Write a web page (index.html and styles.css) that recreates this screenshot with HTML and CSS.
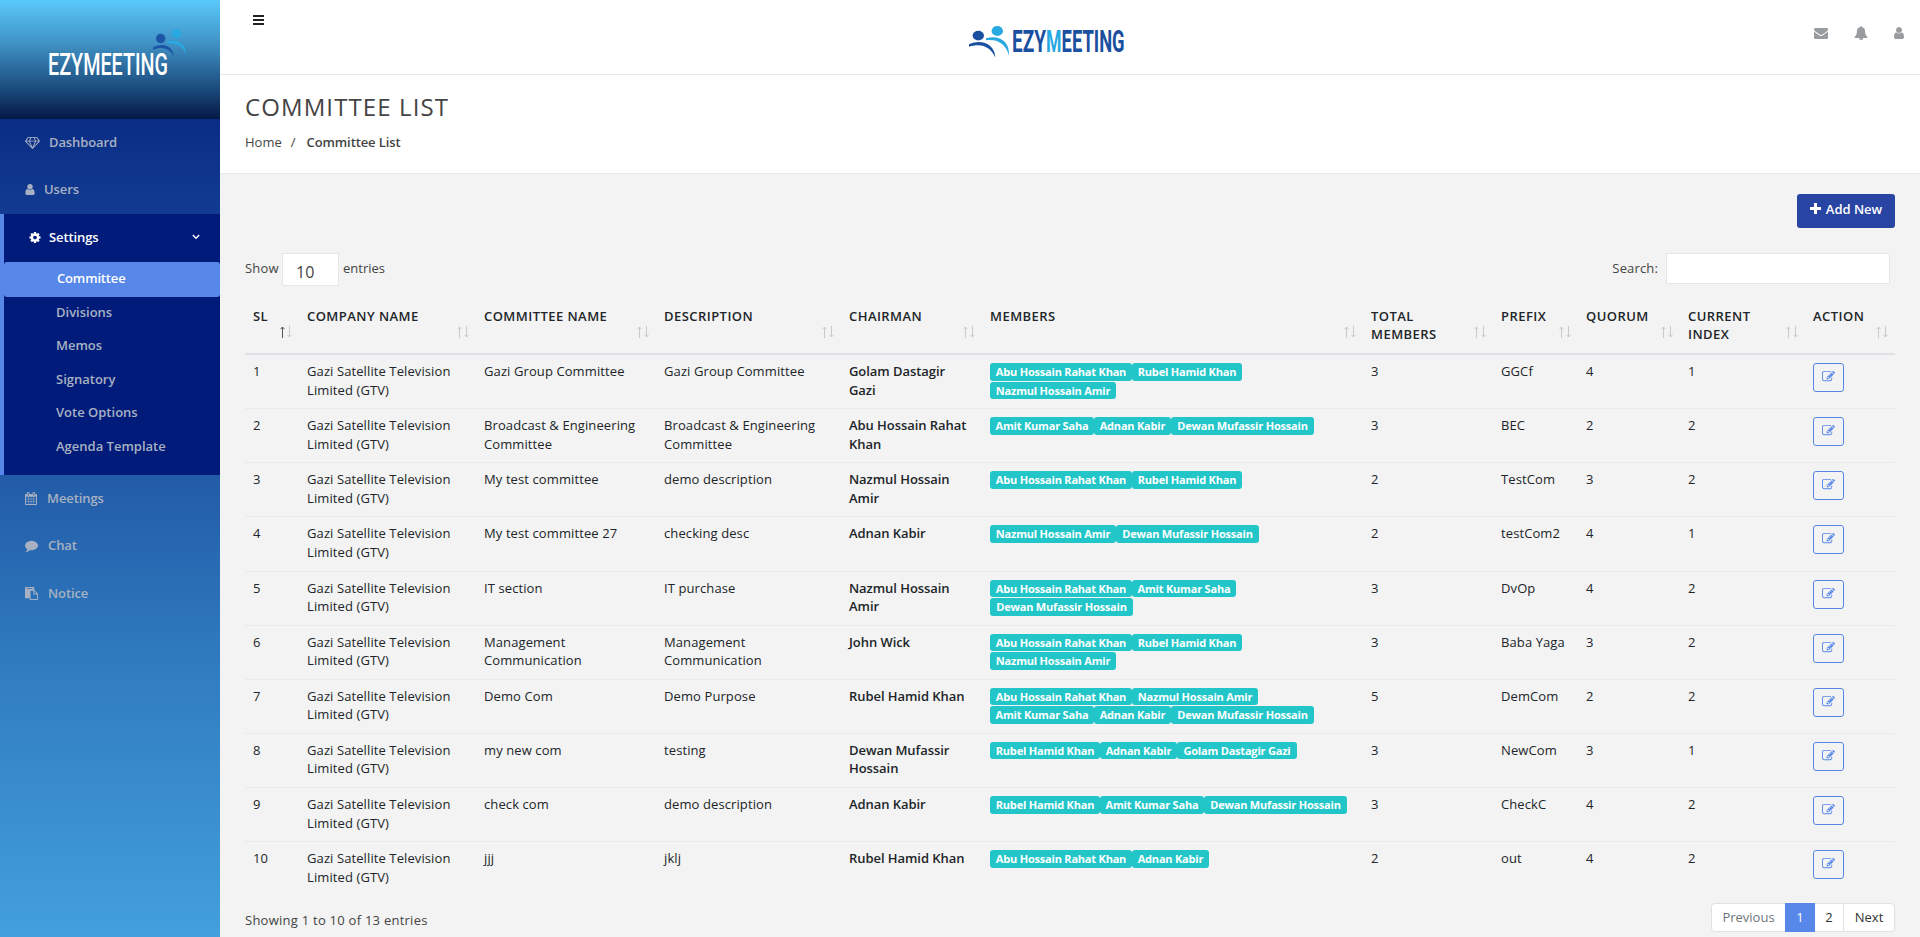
FILE: index.html
```html
<!DOCTYPE html>
<html lang="en">
<head>
<meta charset="utf-8">
<title>Committee List</title>
<link rel="stylesheet" href="styles.css">
</head>
<body>
<svg class="sprite" aria-hidden="true">
  <symbol id="diamond" viewBox="0 0 2048 1792"><path d="M212 768l623 665-300-665h-323zm812 772l349-772h-698l349 772zm-486-900l204-384h-262l-288 384h346zm675 793l623-665h-323l-300 665zm-528-793h678l-204-384h-270l-204 384zm824 0h346l-288-384h-262l204 384zm141-486l384 512q14 18 13 41.500t-17 40.500l-960 1024q-18 20-47 20t-47-20l-960-1024q-16-17-17-40.500t13-41.500l384-512q18-26 51-26h1152q33 0 51 26z"/></symbol>
  <symbol id="user" viewBox="256 0 1280 1792"><path d="M1536 1399q0 109-62.500 187t-150.500 78h-854q-88 0-150.500-78t-62.500-187q0-85 8.500-160.500t31.500-152 58.500-131 94-89 134.500-34.500q131 128 313 128t313-128q76 0 134.500 34.500t94 89 58.500 131 31.500 152 8.500 160.500zm-256-887q0 159-112.500 271.500t-271.500 112.500-271.500-112.500-112.500-271.500 112.500-271.500 271.500-112.500 271.500 112.500 112.500 271.500z"/></symbol>
  <symbol id="cog" viewBox="128 0 1536 1792"><path d="M1152 896q0-106-75-181t-181-75-181 75-75 181 75 181 181 75 181-75 75-181zm512-109v222q0 12-8 23t-20 13l-185 28q-19 54-39 91 35 50 107 138 10 12 10 25t-9 23q-27 37-99 108t-94 71q-12 0-26-9l-138-108q-44 23-91 38-16 136-29 186-7 28-36 28h-222q-14 0-24.500-8.500t-11.500-21.500l-28-184q-49-16-90-37l-141 107q-10 9-25 9-14 0-25-11-126-114-165-168-7-10-7-23 0-12 8-23 15-21 51-66.500t54-70.500q-27-50-41-99l-183-27q-13-2-21-12.500t-8-23.500v-222q0-12 8-23t19-13l186-28q14-46 39-92-40-57-107-138-10-12-10-24 0-10 9-23 26-36 98.500-107.500t94.500-71.500q13 0 26 10l138 107q44-23 91-38 16-136 29-186 7-28 36-28h222q14 0 24.500 8.500t11.500 21.500l28 184q49 16 90 37l142-107q9-9 24-9 13 0 25 10 129 119 165 170 7 8 7 22 0 12-8 23-15 21-51 66.500t-54 70.500q26 50 41 98l183 28q13 2 21 12.500t8 23.500z"/></symbol>
  <symbol id="calendar" viewBox="64 0 1664 1792"><path d="M192 1664h288v-288h-288v288zm352 0h320v-288h-320v288zm-352-352h288v-320h-288v320zm352 0h320v-320h-320v320zm-352-384h288v-288h-288v288zm736 736h320v-288h-320v288zm-384-736h320v-288h-320v288zm768 736h288v-288h-288v288zm-384-352h320v-320h-320v320zm-352-864v-288q0-13-9.500-22.500t-22.500-9.500h-64q-13 0-22.500 9.500t-9.500 22.500v288q0 13 9.500 22.500t22.500 9.500h64q13 0 22.500-9.500t9.500-22.500zm736 864h288v-320h-288v320zm-384-384h320v-288h-320v288zm384 0h288v-288h-288v288zm32-480v-288q0-13-9.500-22.500t-22.500-9.500h-64q-13 0-22.500 9.500t-9.500 22.500v288q0 13 9.500 22.500t22.500 9.500h64q13 0 22.500-9.500t9.500-22.500zm384-64v1280q0 52-38 90t-90 38h-1408q-52 0-90-38t-38-90v-1280q0-52 38-90t90-38h128v-96q0-66 47-113t113-47h64q66 0 113 47t47 113v96h384v-96q0-66 47-113t113-47h64q66 0 113 47t47 113v96h128q52 0 90 38t38 90z"/></symbol>
  <symbol id="comment" viewBox="0 0 1792 1792"><path d="M1792 896q0 174-120 321.500t-326 233-450 85.500q-70 0-145-8-198 175-460 242-49 14-114 22-17 2-30.500-9t-17.500-29v-1q-3-4-.5-12t2-10 4.500-9.500l6-9 7-8.500 8-9q7-8 31-34.500t34.500-38 31-39.500 32.500-51 27-59 26-76q-157-89-247.500-220t-90.500-281q0-130 71-248.500t191-204.500 286-136.500 348-50.500q244 0 450 85.500t326 233 120 321.500z"/></symbol>
  <symbol id="paste" viewBox="0 0 1792 1792"><path d="M768 1664h896v-640h-416q-40 0-68-28t-28-68v-416h-384v1152zm256-1440v-64q0-13-9.500-22.500t-22.500-9.500h-704q-13 0-22.500 9.500t-9.500 22.500v64q0 13 9.500 22.500t22.500 9.500h704q13 0 22.500-9.500t9.500-22.500zm256 672h299l-299-299v299zm512 128v672q0 40-28 68t-68 28h-960q-40 0-68-28t-28-68v-160h-544q-40 0-68-28t-28-68v-1344q0-40 28-68t68-28h1088q40 0 68 28t28 68v328q21 13 36 28l408 408q28 28 48 76t20 88z"/></symbol>
  <symbol id="envelope" viewBox="0 0 1792 1792"><path d="M1792 710v794q0 66-47 113t-113 47h-1472q-66 0-113-47t-47-113v-794q44 49 101 87 362 246 497 345 57 42 92.500 65.500t94.500 48 110 24.500h2q51 0 110-24.500t94.500-48 92.500-65.500q170-123 498-345 57-39 100-87zm0-294q0 79-49 151t-122 123q-376 261-468 325-10 7-42.500 31t-54 38.500-52 32.500-57.500 27-50 9h-2q-23 0-50-9t-57.500-27-52-32.500-54-38.500-42.500-31q-91-64-262-182.500t-205-142.500q-62-42-117-115.500t-55-136.500q0-78 41.500-130t118.500-52h1472q65 0 112.500 47t47.500 113z"/></symbol>
  <symbol id="bell" viewBox="0 0 1792 1792"><path d="M912 1696q0-16-16-16-59 0-101.500-42.500t-42.500-101.500q0-16-16-16t-16 16q0 73 51.500 124.500t124.500 51.500q16 0 16-16zm816-288q0 52-38 90t-90 38h-448q0 106-75 181t-181 75-181-75-75-181h-448q-52 0-90-38t-38-90q50-42 91-88t85-119.500 74.500-158.500 50-206 19.500-260q0-152 117-282.500t307-158.500q-8-19-8-39 0-40 28-68t68-28 68 28 28 68q0 20-8 39 190 28 307 158.500t117 282.500q0 139 19.500 260t50 206 74.500 158.500 85 119.500 91 88z"/></symbol>
  <symbol id="edit" viewBox="0 0 1792 1792"><path d="M888 1184l116-116-152-152-116 116v56h96v96h56zm440-720q-16-16-33 1l-350 350q-17 17-1 33t33-1l350-350q17-17 1-33zm80 594v190q0 119-84.500 203.500t-203.500 84.500h-832q-119 0-203.500-84.500t-84.500-203.500v-832q0-119 84.500-203.500t203.500-84.500h832q63 0 117 25 15 7 18 23 3 17-9 29l-49 49q-14 14-32 8-23-6-45-6h-832q-66 0-113 47t-47 113v832q0 66 47 113t113 47h832q66 0 113-47t47-113v-126q0-13 9-22l64-64q15-15 35-7t20 29zm-96-738l288 288-672 672h-288v-288zm444 132l-92 92-288-288 92-92q28-28 68-28t68 28l152 152q28 28 28 68t-28 68z"/></symbol>
  <symbol id="plus" viewBox="0 0 11 11"><path d="M4 0h3v4h4v3H7v4H4V7H0V4h4z"/></symbol>
  <symbol id="arrow-up" viewBox="0 0 5 12"><path d="M2.500 12V1M.5 3.200l2-2.200 2 2.200"/></symbol>
  <symbol id="arrow-down" viewBox="0 0 5 12"><path d="M2.500 0v11M.5 8.800l2 2.200 2-2.200"/></symbol>
</svg>
<div class="page">
  <aside class="sidebar">
    <div class="brand">
      <svg width="220" height="119" viewBox="0 0 220 119">
        <circle cx="160.700" cy="38.500" r="4.700" fill="#1b55a5"/>
        <circle cx="176.500" cy="33.700" r="4.700" fill="#28a9e2"/>
        <path d="M153 47.500C163 42.500 172.500 45 174.300 57.500C171 49.500 163.500 45.500 153 49.800Z" fill="#1b55a5"/>
        <path d="M167 41.300C178 39 186.500 44 186 56C184 47.500 179 42.500 167 43.500Z" fill="#28a9e2"/>
        <text class="logo-text" x="48" y="75.400" textLength="120" lengthAdjust="spacingAndGlyphs">EZYMEETING</text>
      </svg>
    </div>
    <nav class="menu">
      <a class="item"><svg width="15" height="13"><use href="#diamond"/></svg><span class="g9">Dashboard</span></a>
      <a class="item"><svg width="10" height="13"><use href="#user"/></svg><span class="g9">Users</span></a>
      <div class="group">
        <a class="item"><svg width="12" height="13"><use href="#cog"/></svg><span class="g8">Settings</span>
          <svg class="chevron" width="8" height="6" viewBox="0 0 8 6"><path d="M.8 1l3.200 3.200L7.200 1"/></svg></a>
        <ul class="submenu">
          <li class="active">Committee</li><li>Divisions</li><li>Memos</li><li>Signatory</li><li>Vote Options</li><li>Agenda Template</li>
        </ul>
      </div>
      <a class="item"><svg width="12" height="13"><use href="#calendar"/></svg><span class="g10">Meetings</span></a>
      <a class="item"><svg width="13" height="13"><use href="#comment"/></svg><span class="g10">Chat</span></a>
      <a class="item"><svg width="13" height="13"><use href="#paste"/></svg><span class="g10">Notice</span></a>
    </nav>
  </aside>
  <main class="main">
    <header class="topbar">
      <svg class="burger" width="11" height="10" viewBox="0 0 11 10"><path d="M0 1h11M0 5h11M0 9h11"/></svg>
      <svg class="logo" width="164" height="46" viewBox="968 18 164 46">
        <ellipse cx="978.300" cy="35.600" rx="5.700" ry="4.900" fill="#1b4fa0"/>
        <ellipse cx="997.300" cy="31" rx="5.700" ry="5.100" fill="#28a9e2"/>
        <path d="M969 44.300C981 38.500 995 44 995.300 57.500C991 47.500 982 42.500 969 46.800Z" fill="#1b4fa0"/>
        <path d="M986 38.200C999 34.500 1010 41 1009 55.500C1006 45 999 38.800 986 40.300Z" fill="#28a9e2"/>
        <text class="logo-text bold" x="1012" y="52" textLength="34" lengthAdjust="spacingAndGlyphs">EZY</text>
        <text class="logo-text bold light" x="1046" y="52" textLength="15.500" lengthAdjust="spacingAndGlyphs">M</text>
        <text class="logo-text bold" x="1061.600" y="52" textLength="63" lengthAdjust="spacingAndGlyphs">EETING</text>
      </svg>
      <div class="tools">
        <svg width="14" height="14"><use href="#envelope"/></svg>
        <svg width="14" height="14"><use href="#bell"/></svg>
        <svg width="10" height="14"><use href="#user"/></svg>
      </div>
    </header>
    <section class="heading">
      <h1>COMMITTEE LIST</h1>
      <div class="crumbs"><span>Home</span><span class="sep">/</span><b>Committee List</b></div>
    </section>
    <section class="content">
      <div class="actions"><button class="add"><svg width="11" height="11"><use href="#plus"/></svg>Add New</button></div>
      <div class="controls">
        <div class="length"><span class="show">Show</span><span class="select">10</span><span class="entries">entries</span></div>
        <label class="search"><span>Search:</span><input type="text"></label>
      </div>
      <table>
        <colgroup><col class="c1"><col class="c2"><col class="c3"><col class="c4"><col class="c5"><col class="c6"><col class="c7"><col class="c8"><col class="c9"><col class="c10"><col class="c11"></colgroup>
        <thead><tr>
          <th>SL<span class="sort"><svg class="asc"><use href="#arrow-up"/></svg><svg><use href="#arrow-down"/></svg></span></th>
          <th>COMPANY NAME<span class="sort"><svg><use href="#arrow-up"/></svg><svg><use href="#arrow-down"/></svg></span></th>
          <th>COMMITTEE NAME<span class="sort"><svg><use href="#arrow-up"/></svg><svg><use href="#arrow-down"/></svg></span></th>
          <th>DESCRIPTION<span class="sort"><svg><use href="#arrow-up"/></svg><svg><use href="#arrow-down"/></svg></span></th>
          <th>CHAIRMAN<span class="sort"><svg><use href="#arrow-up"/></svg><svg><use href="#arrow-down"/></svg></span></th>
          <th>MEMBERS<span class="sort"><svg><use href="#arrow-up"/></svg><svg><use href="#arrow-down"/></svg></span></th>
          <th>TOTAL<br>MEMBERS<span class="sort"><svg><use href="#arrow-up"/></svg><svg><use href="#arrow-down"/></svg></span></th>
          <th>PREFIX<span class="sort"><svg><use href="#arrow-up"/></svg><svg><use href="#arrow-down"/></svg></span></th>
          <th>QUORUM<span class="sort"><svg><use href="#arrow-up"/></svg><svg><use href="#arrow-down"/></svg></span></th>
          <th>CURRENT<br>INDEX<span class="sort"><svg><use href="#arrow-up"/></svg><svg><use href="#arrow-down"/></svg></span></th>
          <th>ACTION<span class="sort"><svg><use href="#arrow-up"/></svg><svg><use href="#arrow-down"/></svg></span></th>
        </tr></thead>
        <tbody>
          <tr><td>1</td><td>Gazi Satellite Television<br>Limited (GTV)</td><td>Gazi Group Committee</td><td>Gazi Group Committee</td><td class="chair">Golam Dastagir<br>Gazi</td><td class="tags"><i class="tag w142">Abu Hossain Rahat Khan</i><i class="tag w110">Rubel Hamid Khan</i><br><i class="tag w126">Nazmul Hossain Amir</i></td><td>3</td><td>GGCf</td><td>4</td><td>1</td><td class="act"><button class="edit"><svg width="13" height="13"><use href="#edit"/></svg></button></td></tr>
          <tr><td>2</td><td>Gazi Satellite Television<br>Limited (GTV)</td><td>Broadcast &amp; Engineering<br>Committee</td><td>Broadcast &amp; Engineering<br>Committee</td><td class="chair">Abu Hossain Rahat<br>Khan</td><td class="tags"><i class="tag w104">Amit Kumar Saha</i><i class="tag w77">Adnan Kabir</i><i class="tag w143">Dewan Mufassir Hossain</i></td><td>3</td><td>BEC</td><td>2</td><td>2</td><td class="act"><button class="edit"><svg width="13" height="13"><use href="#edit"/></svg></button></td></tr>
          <tr><td>3</td><td>Gazi Satellite Television<br>Limited (GTV)</td><td>My test committee</td><td>demo description</td><td class="chair">Nazmul Hossain<br>Amir</td><td class="tags"><i class="tag w142">Abu Hossain Rahat Khan</i><i class="tag w110">Rubel Hamid Khan</i></td><td>2</td><td>TestCom</td><td>3</td><td>2</td><td class="act"><button class="edit"><svg width="13" height="13"><use href="#edit"/></svg></button></td></tr>
          <tr><td>4</td><td>Gazi Satellite Television<br>Limited (GTV)</td><td>My test committee 27</td><td>checking desc</td><td class="chair">Adnan Kabir</td><td class="tags"><i class="tag w126">Nazmul Hossain Amir</i><i class="tag w143">Dewan Mufassir Hossain</i></td><td>2</td><td>testCom2</td><td>4</td><td>1</td><td class="act"><button class="edit"><svg width="13" height="13"><use href="#edit"/></svg></button></td></tr>
          <tr><td>5</td><td>Gazi Satellite Television<br>Limited (GTV)</td><td>IT section</td><td>IT purchase</td><td class="chair">Nazmul Hossain<br>Amir</td><td class="tags"><i class="tag w142">Abu Hossain Rahat Khan</i><i class="tag w104">Amit Kumar Saha</i><br><i class="tag w143">Dewan Mufassir Hossain</i></td><td>3</td><td>DvOp</td><td>4</td><td>2</td><td class="act"><button class="edit"><svg width="13" height="13"><use href="#edit"/></svg></button></td></tr>
          <tr><td>6</td><td>Gazi Satellite Television<br>Limited (GTV)</td><td>Management<br>Communication</td><td>Management<br>Communication</td><td class="chair">John Wick</td><td class="tags"><i class="tag w142">Abu Hossain Rahat Khan</i><i class="tag w110">Rubel Hamid Khan</i><br><i class="tag w126">Nazmul Hossain Amir</i></td><td>3</td><td>Baba Yaga</td><td>3</td><td>2</td><td class="act"><button class="edit"><svg width="13" height="13"><use href="#edit"/></svg></button></td></tr>
          <tr><td>7</td><td>Gazi Satellite Television<br>Limited (GTV)</td><td>Demo Com</td><td>Demo Purpose</td><td class="chair">Rubel Hamid Khan</td><td class="tags"><i class="tag w142">Abu Hossain Rahat Khan</i><i class="tag w126">Nazmul Hossain Amir</i><br><i class="tag w104">Amit Kumar Saha</i><i class="tag w77">Adnan Kabir</i><i class="tag w143">Dewan Mufassir Hossain</i></td><td>5</td><td>DemCom</td><td>2</td><td>2</td><td class="act"><button class="edit"><svg width="13" height="13"><use href="#edit"/></svg></button></td></tr>
          <tr><td>8</td><td>Gazi Satellite Television<br>Limited (GTV)</td><td>my new com</td><td>testing</td><td class="chair">Dewan Mufassir<br>Hossain</td><td class="tags"><i class="tag w110">Rubel Hamid Khan</i><i class="tag w77">Adnan Kabir</i><i class="tag w120">Golam Dastagir Gazi</i></td><td>3</td><td>NewCom</td><td>3</td><td>1</td><td class="act"><button class="edit"><svg width="13" height="13"><use href="#edit"/></svg></button></td></tr>
          <tr><td>9</td><td>Gazi Satellite Television<br>Limited (GTV)</td><td>check com</td><td>demo description</td><td class="chair">Adnan Kabir</td><td class="tags"><i class="tag w110">Rubel Hamid Khan</i><i class="tag w104">Amit Kumar Saha</i><i class="tag w143">Dewan Mufassir Hossain</i></td><td>3</td><td>CheckC</td><td>4</td><td>2</td><td class="act"><button class="edit"><svg width="13" height="13"><use href="#edit"/></svg></button></td></tr>
          <tr><td>10</td><td>Gazi Satellite Television<br>Limited (GTV)</td><td>jjj</td><td>jklj</td><td class="chair">Rubel Hamid Khan</td><td class="tags"><i class="tag w142">Abu Hossain Rahat Khan</i><i class="tag w77">Adnan Kabir</i></td><td>2</td><td>out</td><td>4</td><td>2</td><td class="act"><button class="edit"><svg width="13" height="13"><use href="#edit"/></svg></button></td></tr>
        </tbody>
      </table>
      <footer class="footer">
        <span class="info">Showing 1 to 10 of 13 entries</span>
        <div class="pager"><span class="prev">Previous</span><span class="current">1</span><span class="two">2</span><span class="next">Next</span></div>
      </footer>
    </section>
  </main>
</div>
</body>
</html>
```
FILE: styles.css
```css
* { box-sizing: border-box; }
body { margin: 0; height: 937px; overflow: hidden; background: #f3f3f3; color: #444; font: 13px/18.57px "Open Sans", "Noto Sans", sans-serif; }
svg { fill: currentColor; flex: none; }
.sprite { position: absolute; width: 0; height: 0; }
.page { display: flex; height: 937px; }

.sidebar { width: 220px; flex: none; background: linear-gradient(#0a2c85 119px, #123c91 214px, #225ba8 475px, #2e78bd 640px, #43a0dc 937px); }
.brand { height: 119px; background: linear-gradient(#59c9fa, #3f8fc2 38%, #1b4a7c 75%, #041844); }
.brand svg { display: block; overflow: visible; }
.logo { overflow: visible; }
.logo-text { font: 500 31px Roboto, sans-serif; fill: #fff; }
.logo-text.bold { font-weight: 700; fill: #1b4fa0; }
.logo-text.light { fill: #28a9e2; }
.item { display: flex; align-items: center; height: 47.57px; padding: 0 0 2px 25px; color: #a7b1c2; font-weight: 600; letter-spacing: -.1px; }
.item svg { margin-top: 1px; }
.g8 { margin-left: 8px; }
.g9 { margin-left: 9px; }
.g10 { margin-left: 10px; }
.group { height: 261px; background: #001b79; border-left: 4px solid #5787e8; }
.group .item { color: #fff; padding-left: 25px; padding-right: 20px; }
.chevron { margin-left: auto; fill: none; stroke: #fff; stroke-width: 1.400; }
.group .item .chevron { margin-left: auto; }
.submenu { list-style: none; margin: 0; padding: 0; font-weight: 600; color: #a7b1c2; }
.submenu li { height: 33.57px; padding: 6px 0 0 52px; }
.submenu .active { height: 35px; padding-top: 7px; padding-left: 53px; color: #fff; background: #5787e8; border-radius: 3px; letter-spacing: -.15px; }

.main { flex: 1; min-width: 0; }
.topbar { display: flex; height: 75px; background: #fff; border-bottom: 1px solid #e7eaec; }
.burger { margin: 15px 0 0 33px; fill: none; stroke: #222; stroke-width: 2; }
.logo { margin: 18px 0 0 704px; }
.tools { display: flex; margin: 26px 16px 0 auto; color: #999c9e; }
.tools svg:nth-child(2) { margin: 0 26px; }
.heading { height: 99px; background: #fff; border-bottom: 1px solid #e7eaec; padding: 17px 25px 0; }
h1 { margin: 0; font: 400 24px/30px "Open Sans", sans-serif; letter-spacing: 1.100px; }
.crumbs { display: flex; margin-top: 11px; }
.sep { margin: 0 11px 0 9px; }
.crumbs b { font-weight: 600; letter-spacing: -.1px; }

.content { padding: 20px 25px 0; }
.actions { display: flex; justify-content: flex-end; height: 59px; }
.add { display: flex; justify-content: center; width: 98px; height: 34px; gap: 5px; padding: 6px 0 0; border: 0; border-radius: 3px; background: #2945a4; color: #fff; font: 600 13px/19px "Open Sans", sans-serif; }
.add svg { margin-top: 3px; }
.controls { display: flex; justify-content: space-between; height: 45px; padding-right: 5px; }
.length, .search { display: flex; line-height: 31px; }
.show { width: 37px; letter-spacing: .2px; }
.search span { letter-spacing: .15px; }
.select { width: 57px; height: 33px; padding: 3px 0 0 13px; border: 1px solid #e5e6e7; background: #fff; font-size: 16px; }
.entries { margin-left: 4px; }
.search input { width: 224px; height: 31px; margin-left: 8px; border: 1px solid #e5e6e7; background: #fff; }

table { width: 1650px; table-layout: fixed; border-collapse: separate; border-spacing: 0; color: #212529; }
.c1 { width: 54px; } .c2 { width: 177px; } .c3 { width: 180px; } .c4 { width: 185px; } .c5 { width: 141px; } .c6 { width: 381px; }
.c7 { width: 130px; } .c8 { width: 85px; } .c9 { width: 102px; } .c10 { width: 125px; } .c11 { width: 90px; }
th { position: relative; height: 57px; padding: 9px 8px 8px; border-bottom: 2px solid #dee2e6; text-align: left; vertical-align: top; font-weight: 600; line-height: 18px; letter-spacing: .45px; white-space: nowrap; }
td { height: 54.14px; padding: 7px 0 0 8px; border-bottom: 1px solid #e7eaec; vertical-align: top; letter-spacing: .1px; white-space: nowrap; }
tr:last-child td { border-bottom: 0; }
.sort { position: absolute; right: 7px; bottom: 15px; display: flex; gap: 2px; }
.sort svg { width: 5px; height: 12px; fill: none; stroke: #c8c8c8; stroke-width: 1; }
.sort .asc { stroke: #555; }
td.chair { font-weight: 600; letter-spacing: -.06px; }
td.tags, td.act { padding-top: 8px; }
.tag { display: inline-block; height: 17.500px; border-radius: 3px; background: #23c6c8; color: #fff; text-align: center; vertical-align: top; font: normal 700 11px/17px "Open Sans", sans-serif; letter-spacing: -.2px; }
.w142 { width: 142px; } .w110 { width: 110px; } .w126 { width: 126px; } .w104 { width: 104px; } .w77 { width: 77px; } .w143 { width: 143px; } .w120 { width: 120px; }
.edit { display: flex; justify-content: center; width: 31px; height: 29px; padding: 6px 0 0; border: 1px solid #5787e8; border-radius: 3px; background: none; color: #5787e8; }

.footer { display: flex; justify-content: space-between; margin-top: 7px; }
.info { margin-top: 8px; letter-spacing: .25px; }
.pager { display: flex; height: 29px; text-align: center; line-height: 26px; background: #fff; border: 1px solid #dee2e6; border-radius: 4px; color: #333; }
.prev { width: 73px; color: #6c757d; }
.current { width: 30px; height: 29px; margin-top: -1px; background: #5787e8; color: #fff; line-height: 28px; }
.two { width: 29px; border-right: 1px solid #dee2e6; }
.next { width: 50px; }
```
